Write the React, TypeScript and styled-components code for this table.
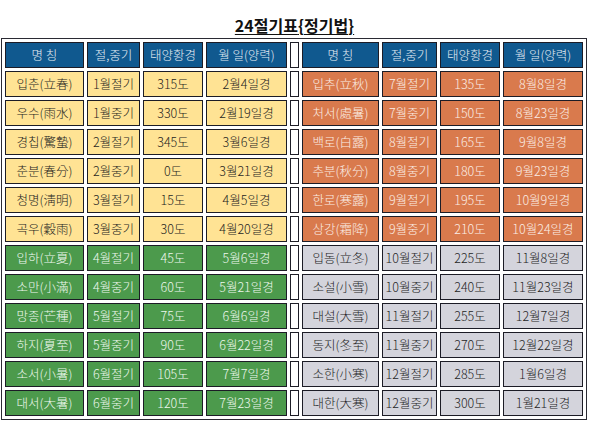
import { createGlobalStyle } from 'styled-components';
import styled from 'styled-components';

const GlobalStyle = createGlobalStyle`
  html, body {
    margin: 0;
    padding: 0;
    background: #ffffff;
  }
  body {
    font-family: "Noto Sans CJK KR", "Noto Sans", sans-serif;
  }
`

type Tone = 'yellow' | 'orange' | 'green' | 'gray'

const tones: Record<Tone, { bg: string; fg: string }> = {
  yellow: { bg: '#ffe394', fg: '#1e1e1e' },
  orange: { bg: '#d97a4d', fg: '#fbeee6' },
  green: { bg: '#4c9a4c', fg: '#eef8ee' },
  gray: { bg: '#d4d4dc', fg: '#1e1e1e' },
}

const Page = styled.div`
  width: 589px;
`

const Title = styled.div`
  height: 38px;
  display: flex;
  align-items: flex-end;
  justify-content: center;
  box-sizing: border-box;
  padding-bottom: 4px;
  font-size: 16px;
  line-height: 17px;
  font-weight: 700;
  color: #111;
  text-decoration: underline;
  text-underline-offset: 2px;
`

const Table = styled.table`
  margin-left: 1px;
  width: 586px;
  table-layout: fixed;
  border-collapse: separate;
  border-spacing: 3px;
  border: 1px solid #2a2a33;
`

const Col = styled.col<{ $w: number }>`
  width: ${p => p.$w}px;
`

const Cell = styled.td<{ $tone: Tone }>`
  height: 24px;
  padding: 0;
  border: 1px solid #1c1c26;
  background: ${p => tones[p.$tone].bg};
  color: ${p => tones[p.$tone].fg};
  text-align: center;
  font-size: 12.5px;
  font-weight: 300;
  line-height: 24px;
  white-space: nowrap;
  overflow: hidden;
`

const HeadCell = styled.th`
  height: 24px;
  padding: 0;
  border: 1px solid #1c1c26;
  background: #10598f;
  color: #e4ecf4;
  text-align: center;
  font-size: 12.5px;
  font-weight: 300;
  line-height: 24px;
  white-space: nowrap;
`

const Gap = styled.td`
  padding: 0;
  border: 1px solid #1c1c26;
  background: #ffffff;
`

type Row = [string, string, string, string]

const left: Row[] = [
  ['입춘(立春)', '1월절기', '315도', '2월4일경'],
  ['우수(雨水)', '1월중기', '330도', '2월19일경'],
  ['경칩(驚蟄)', '2월절기', '345도', '3월6일경'],
  ['춘분(春分)', '2월중기', '0도', '3월21일경'],
  ['청명(淸明)', '3월절기', '15도', '4월5일경'],
  ['곡우(穀雨)', '3월중기', '30도', '4월20일경'],
  ['입하(立夏)', '4월절기', '45도', '5월6일경'],
  ['소만(小滿)', '4월중기', '60도', '5월21일경'],
  ['망종(芒種)', '5월절기', '75도', '6월6일경'],
  ['하지(夏至)', '5월중기', '90도', '6월22일경'],
  ['소서(小暑)', '6월절기', '105도', '7월7일경'],
  ['대서(大暑)', '6월중기', '120도', '7월23일경'],
]

const right: Row[] = [
  ['입추(立秋)', '7월절기', '135도', '8월8일경'],
  ['처서(處暑)', '7월중기', '150도', '8월23일경'],
  ['백로(白露)', '8월절기', '165도', '9월8일경'],
  ['추분(秋分)', '8월중기', '180도', '9월23일경'],
  ['한로(寒露)', '9월절기', '195도', '10월9일경'],
  ['상강(霜降)', '9월중기', '210도', '10월24일경'],
  ['입동(立冬)', '10월절기', '225도', '11월8일경'],
  ['소설(小雪)', '10월중기', '240도', '11월23일경'],
  ['대설(大雪)', '11월절기', '255도', '12월7일경'],
  ['동지(冬至)', '11월중기', '270도', '12월22일경'],
  ['소한(小寒)', '12월절기', '285도', '1월6일경'],
  ['대한(大寒)', '12월중기', '300도', '1월21일경'],
]

const heads = ['명 칭', '절,중기', '태양황경', '월 일(양력)']
const widths = [79, 53, 60, 81, 9, 77, 55, 60, 80]

function App() {
  return (
    <Page>
      <GlobalStyle />
      <Title>24절기표{'{'}정기법{'}'}</Title>
      <Table>
        <colgroup>
          {widths.map((w, i) => <Col key={i} $w={w} />)}
        </colgroup>
        <thead>
          <tr>
            {heads.map(h => <HeadCell key={'l' + h}>{h}</HeadCell>)}
            <Gap />
            {heads.map(h => <HeadCell key={'r' + h}>{h}</HeadCell>)}
          </tr>
        </thead>
        <tbody>
          {left.map((row, i) => {
            const lt: Tone = i < 6 ? 'yellow' : 'green'
            const rt: Tone = i < 6 ? 'orange' : 'gray'
            return (
              <tr key={i}>
                {row.map((v, j) => <Cell key={'l' + j} $tone={lt}>{v}</Cell>)}
                <Gap />
                {right[i].map((v, j) => <Cell key={'r' + j} $tone={rt}>{v}</Cell>)}
              </tr>
            )
          })}
        </tbody>
      </Table>
    </Page>
  );
}

export default App;
